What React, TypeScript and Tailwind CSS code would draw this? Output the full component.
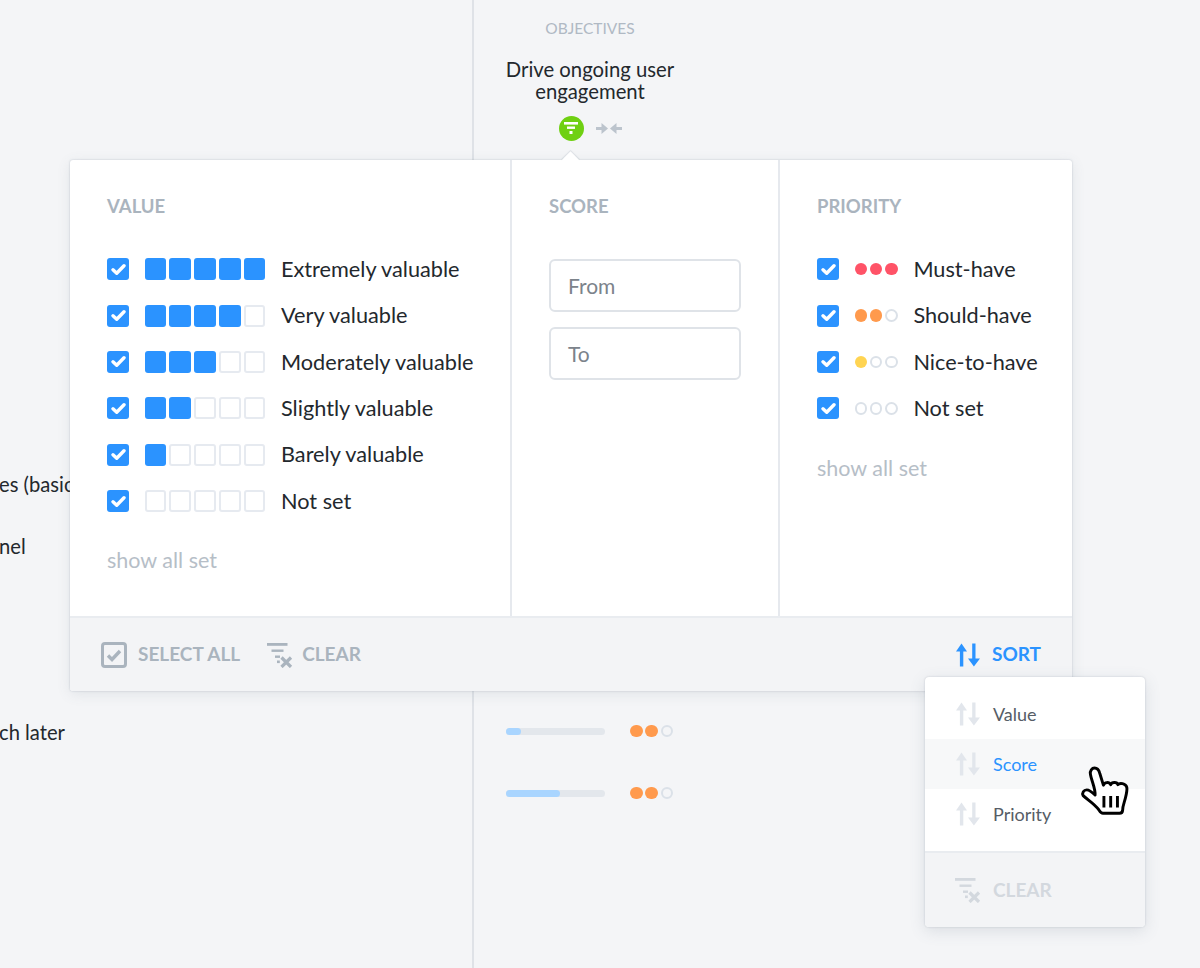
import React from "react";

const font = { fontFamily: '"Lato", "Open Sans", sans-serif' };

function Check() {
  return (
    <span className="flex h-[22px] w-[22px] shrink-0 items-center justify-center rounded-[3px] bg-[#2b93ff]">
      <svg width="15" height="13" viewBox="0 0 15 13" fill="none">
        <path d="M2 6.800 5.700 10.200 13 2.800" stroke="#fff" strokeWidth="3.400" strokeLinecap="round" strokeLinejoin="round" />
      </svg>
    </span>
  );
}

function Squares({ n }: { n: number }) {
  return (
    <span className="flex w-[121px] shrink-0 gap-[3px]">
      {[0, 1, 2, 3, 4].map((i) =>
        i < n ? (
          <span key={i} className="h-[22px] w-[21.8px] rounded-[3px] bg-[#2b93ff]" />
        ) : (
          <span key={i} className="h-[22px] w-[21.8px] rounded-[3px] border-2 border-[#e6eaf0] bg-white" />
        )
      )}
    </span>
  );
}

function Dots({ n, color }: { n: number; color: string }) {
  return (
    <span className="flex shrink-0 gap-[2.8px]">
      {[0, 1, 2].map((i) =>
        i < n ? (
          <span key={i} className="h-[12.6px] w-[12.6px] rounded-full" style={{ background: color }} />
        ) : (
          <span key={i} className="h-[12.6px] w-[12.6px] rounded-full border-2 border-[#dbe1e8]" />
        )
      )}
    </span>
  );
}

function SortIcon({ color }: { color: string }) {
  return (
    <svg width="24" height="24" viewBox="0 0 24 24" fill={color} className="shrink-0">
      <path d="M5.500 0.500 11 8.500H7.300V23.500H3.900V8.500H0Z" />
      <path d="M16.200 0.500H19.500V15.500H24L17.900 23.500 12 15.500H16.200Z" />
    </svg>
  );
}

function ClearIcon({ color }: { color: string }) {
  return (
    <svg width="26" height="26" viewBox="0 0 26 26" fill={color} className="shrink-0">
      <rect x="0" y="1" width="20.500" height="2.800" />
      <rect x="4.500" y="7.500" width="12" height="2.400" />
      <rect x="8" y="13.500" width="5" height="2.400" />
      <rect x="10" y="18.500" width="2.800" height="2.600" />
      <path d="M14.500 15.500 24 25M24 15.500 14.500 25" stroke={color} strokeWidth="3.200" fill="none" />
    </svg>
  );
}

function Hand() {
  return (
    <svg width="52" height="56" viewBox="0 0 50 52" className="absolute right-[13px] top-[88px]">
      <path
        d="M3 28.500c-1.300-2.500.5-5.500 3.500-5.500 3 0 5.500 2.500 8 5 .5-6-3.500-14-4.500-20-.6-3.500 1.500-6 4-6 2.800 0 4.300 2.500 5 5l3.500 11.500c1-3 5.500-3.500 7-.5 1-2.500 6-3 7 0 1.500-2 7.500-1.500 8.500 2.500.6 3-.6 7.500-1.500 11-1 4-2.500 7-2.500 11-.1 2-1.500 3-3 3H22c-2 0-3-2-4-3.500-4-5.500-10-9-15-13.500Z"
        fill="#fff"
        stroke="#000"
        strokeWidth="2.800"
        strokeLinejoin="round"
      />
      <path d="M23 29v11M29.500 29v11M36 29v11" stroke="#000" strokeWidth="2.800" />
    </svg>
  );
}

const values: [number, string][] = [
  [5, "Extremely valuable"],
  [4, "Very valuable"],
  [3, "Moderately valuable"],
  [2, "Slightly valuable"],
  [1, "Barely valuable"],
  [0, "Not set"],
];

const priorities: [number, string, string][] = [
  [3, "#ff5367", "Must-have"],
  [2, "#ff9a4d", "Should-have"],
  [1, "#ffd452", "Nice-to-have"],
  [0, "#ccc", "Not set"],
];

function Heading({ children }: { children: React.ReactNode }) {
  return <div className="h-[20px] text-[18.5px] font-bold leading-[20px] text-[#aab4be]">{children}</div>;
}

function Row({ children, label }: { children: React.ReactNode; label: string }) {
  return (
    <div className="flex h-[46.4px] items-center">
      <Check />
      <span className="ml-[15.500px] flex">{children}</span>
      <span className="ml-[15.500px] whitespace-nowrap text-[21.7px] text-[#23282d]">{label}</span>
    </div>
  );
}

function Meter({ width }: { width: number }) {
  return (
    <div className="flex h-[7px] items-center gap-[25px] pl-[32px]">
      <div className="h-[7px] w-[99px] shrink-0 rounded-full bg-[#e3e7ec]">
        <div className="h-[7px] rounded-full bg-[#a9d5ff]" style={{ width }} />
      </div>
      <Dots n={2} color="#ff9a4d" />
    </div>
  );
}

function MenuItem({ label, active }: { label: string; active?: boolean }) {
  return (
    <div className={`flex h-[50px] items-center gap-[13px] pl-[31px] text-[18px] ${active ? "bg-[#f7f8f9] text-[#2b93ff]" : "text-[#565d66]"}`}>
      <SortIcon color="#e2e6ec" />
      {label}
    </div>
  );
}

export default function App() {
  return (
    <div className="relative flex h-[968px] w-[1200px] overflow-hidden bg-[#f4f5f7]" style={font}>
      {/* page behind */}
      <div className="h-full w-[474px] shrink-0 overflow-hidden border-r-2 border-[#dfe2e7] pt-[471px] text-[20.2px] leading-[26px] text-[#23282d]">
        <div className="ml-[-1px] whitespace-nowrap">es (basic needs)</div>
        <div className="mt-[36px] ml-[-1px] whitespace-nowrap">nel</div>
        <div className="mt-[160px] ml-[-1px] whitespace-nowrap">ch later</div>
      </div>
      <div className="w-[232px] shrink-0">
        <div className="pt-[19px] text-center text-[15.5px] leading-[18px] text-[#b0b9c4]">OBJECTIVES</div>
        <div className="mt-[21px] text-center text-[20.300px] leading-[22px] text-[#23282d]">
          Drive ongoing user
          <br />
          engagement
        </div>
        <div className="mt-[14px] flex items-center pl-[85px]">
          <span className="flex h-[24.500px] w-[24.500px] items-center justify-center rounded-full bg-[#6fd012]">
            <svg width="14" height="12" viewBox="0 0 14 12" fill="#fff">
              <rect x="0" y="0" width="14" height="2.600" />
              <rect x="3" y="4.500" width="8" height="2.400" />
              <rect x="5.500" y="9" width="3" height="3" />
            </svg>
          </span>
          <svg width="26" height="13" viewBox="0 0 26 13" fill="#bcc4cd" className="ml-[12px] mt-[1px]">
            <path d="M0 5H5.500V1L12 6.500 5.500 12V8H0Z" />
            <path d="M26 5H20.500V1L14 6.500 20.500 12V8H26Z" />
          </svg>
        </div>
        <div className="mt-[587px]">
          <Meter width={15} />
        </div>
        <div className="mt-[55px]">
          <Meter width={54} />
        </div>
      </div>

      {/* filter popover */}
      <div className="absolute left-[70px] top-[160px] w-[1002px] rounded-[3px] bg-white shadow-[0_0_2px_rgba(90,105,125,0.35),0_3px_14px_rgba(90,105,125,0.12)]">
        <span className="absolute left-[494px] top-[-6px] h-[13px] w-[13px] rotate-45 bg-white shadow-[-1px_-1px_1px_rgba(90,105,125,0.15)]" />
        <div className="relative flex h-[456px]">
          <div className="w-[442px] border-r-2 border-[#e6e9ee] pl-[37px] pt-[36px]">
            <Heading>VALUE</Heading>
            <div className="mt-[30px]">
              {values.map(([n, label]) => (
                <Row key={label} label={label}>
                  <Squares n={n} />
                </Row>
              ))}
            </div>
            <div className="mt-[23px] text-[21.500px] leading-[26px] text-[#b6bec7]">show all set</div>
          </div>
          <div className="w-[268px] border-r-2 border-[#e6e9ee] pl-[37px] pt-[36px]">
            <Heading>SCORE</Heading>
            <div className="mt-[43px] flex h-[53px] w-[192px] items-center rounded-[6px] border-2 border-[#dfe3e8] pl-[17px] text-[21px] text-[#7c838b]">From</div>
            <div className="mt-[15px] flex h-[53px] w-[192px] items-center rounded-[6px] border-2 border-[#dfe3e8] pl-[17px] text-[21px] text-[#7c838b]">To</div>
          </div>
          <div className="flex-1 pl-[37px] pt-[36px]">
            <Heading>PRIORITY</Heading>
            <div className="mt-[30px]">
              {priorities.map(([n, color, label]) => (
                <Row key={label} label={label}>
                  <Dots n={n} color={color} />
                </Row>
              ))}
            </div>
            <div className="mt-[23px] text-[21.500px] leading-[26px] text-[#b6bec7]">show all set</div>
          </div>
        </div>
        <div className="flex h-[75px] items-center rounded-b-[3px] border-t-2 border-[#e9ecf0] bg-[#f3f4f6] pl-[31px] pr-[31px] text-[19px] font-bold text-[#aab4be]">
          <svg width="26" height="26" viewBox="0 0 26 26" fill="none" className="shrink-0">
            <rect x="1.500" y="1.500" width="23" height="23" rx="2.500" stroke="#aab4be" strokeWidth="3" />
            <path d="M7 13.500 11 17.500 19 9" stroke="#aab4be" strokeWidth="3.400" />
          </svg>
          <span className="ml-[11px]">SELECT ALL</span>
          <span className="ml-[27px]">
            <ClearIcon color="#aab4be" />
          </span>
          <span className="ml-[9px]">CLEAR</span>
          <span className="ml-auto flex items-center gap-[12px] text-[#2b93ff]">
            <SortIcon color="#2b93ff" />
            SORT
          </span>
        </div>
      </div>

      {/* sort menu */}
      <div className="absolute left-[925px] top-[677px] w-[220px] rounded-[4px] bg-white shadow-[0_0_2px_rgba(90,105,125,0.3),0_4px_16px_rgba(90,105,125,0.16)]">
        <div className="pt-[12px] pb-[12px]">
          <MenuItem label="Value" />
          <MenuItem label="Score" active />
          <MenuItem label="Priority" />
        </div>
        <div className="flex h-[76px] items-center gap-[12px] rounded-b-[4px] border-t-2 border-[#e9ecf0] bg-[#f3f4f6] pl-[30px] text-[19px] font-bold text-[#d3d8de]">
          <ClearIcon color="#d3d8de" />
          CLEAR
        </div>
        <Hand />
      </div>
    </div>
  );
}
